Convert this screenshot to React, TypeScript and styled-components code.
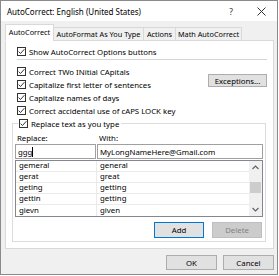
import styled, { createGlobalStyle } from "styled-components";

const GlobalStyle = createGlobalStyle`
  html, body {
    margin: 0;
    padding: 0;
    background: #ffffff;
  }
  * {
    box-sizing: border-box;
  }
`;

const entries = [
  ["gemeral", "general"],
  ["gerat", "great"],
  ["geting", "getting"],
  ["gettin", "getting"],
  ["gievn", "given"],
];

const options = [
  "Correct TWo INitial CApitals",
  "Capitalize first letter of sentences",
  "Capitalize names of days",
  "Correct accidental use of cAPS LOCK key",
];

const tabs = [
  { label: "AutoCorrect", width: 49, active: true },
  { label: "AutoFormat As You Type", width: 91 },
  { label: "Actions", width: 33 },
  { label: "Math AutoCorrect", width: 67 },
];

const Check = () => (
  <CheckBox>
    <svg width="7" height="7" viewBox="0 0 7 7">
      <polyline
        points="0.6,3.6 2.5,5.5 6.4,1.2"
        fill="none"
        stroke="#333"
        strokeWidth="1"
      />
    </svg>
  </CheckBox>
);

export default function App() {
  return (
    <>
      <GlobalStyle />
      <Window>
        <TitleBar>
          <Title>AutoCorrect: English (United States)</Title>
          <TitleButtons>
            <Help>?</Help>
            <svg width="9" height="9" viewBox="0 0 9 9">
              <path d="M0.5 0.5 L8.5 8.5 M8.5 0.5 L0.5 8.5" stroke="#333" strokeWidth="1" />
            </svg>
          </TitleButtons>
        </TitleBar>
        <Body>
          <TabStrip>
            {tabs.map((t) => (
              <Tab key={t.label} $active={t.active} $width={t.width}>
                {t.label}
              </Tab>
            ))}
          </TabStrip>
          <Panel>
            <OptionRow>
              <Check />
              <span>Show AutoCorrect Options buttons</span>
            </OptionRow>
            <Separator />
            <OptionsBlock>
              <OptionsList>
                {options.map((o) => (
                  <OptionRow key={o}>
                    <Check />
                    <span>{o}</span>
                  </OptionRow>
                ))}
              </OptionsList>
              <Button $width={59}>Exceptions...</Button>
            </OptionsBlock>
            <GroupBox>
              <Legend>
                <Check />
                <span>Replace text as you type</span>
              </Legend>
              <FieldGrid>
                <FieldLabel>Replace:</FieldLabel>
                <FieldLabel>With:</FieldLabel>
                <TextInput>
                  ggg<Caret />
                </TextInput>
                <TextInput>MyLongNameHere@Gmail.com</TextInput>
              </FieldGrid>
              <List>
                <Rows>
                  {entries.map(([a, b]) => (
                    <Row key={a}>
                      <Cell $first>{a}</Cell>
                      <Cell>{b}</Cell>
                    </Row>
                  ))}
                </Rows>
                <ScrollBar>
                  <Arrow>
                    <svg width="7" height="5" viewBox="0 0 7 5">
                      <polyline points="0.5,4 3.5,1 6.5,4" fill="none" stroke="#606060" strokeWidth="1.1" />
                    </svg>
                  </Arrow>
                  <Track>
                    <Thumb />
                  </Track>
                  <Arrow>
                    <svg width="7" height="5" viewBox="0 0 7 5">
                      <polyline points="0.5,1 3.5,4 6.5,1" fill="none" stroke="#606060" strokeWidth="1.1" />
                    </svg>
                  </Arrow>
                </ScrollBar>
              </List>
              <GroupButtons>
                <Button $width={50} $height={16} $focused>
                  Add
                </Button>
                <Button $width={50} $height={16} $disabled>
                  Delete
                </Button>
              </GroupButtons>
            </GroupBox>
          </Panel>
          <Footer>
            <Button $width={51} $height={15}>
              OK
            </Button>
            <Button $width={51} $height={15}>
              Cancel
            </Button>
          </Footer>
        </Body>
      </Window>
    </>
  );
}

const Window = styled.div`
  width: 278px;
  height: 275px;
  border: 1px solid #8a8a8a;
  background: #f0f0f0;
  display: flex;
  flex-direction: column;
  font-family: "Noto Sans", "Open Sans", sans-serif;
  font-size: 7.8px;
  color: #000;
  overflow: hidden;
`;

const TitleBar = styled.div`
  height: 20px;
  background: #ffffff;
  display: flex;
  align-items: center;
  justify-content: space-between;
  padding: 0 11px 0 6px;
`;

const Title = styled.div`
  font-size: 8px;
`;

const TitleButtons = styled.div`
  display: flex;
  align-items: center;
  gap: 24px;
`;

const Help = styled.span`
  font-size: 8.5px;
  color: #333;
`;

const Body = styled.div`
  flex: 1;
  display: flex;
  flex-direction: column;
  padding: 3px 3px 0 4px;
`;

const TabStrip = styled.div`
  display: flex;
  align-items: flex-end;
  height: 17px;
  position: relative;
  z-index: 1;
  margin-bottom: -1px;
`;

const Tab = styled.div<{ $active?: boolean; $width: number }>`
  width: ${(p) => p.$width}px;
  height: ${(p) => (p.$active ? 17 : 14)}px;
  border: 1px solid #d9d9d9;
  border-bottom: ${(p) => (p.$active ? "1px solid #ffffff" : "1px solid #d9d9d9")};
  background: ${(p) => (p.$active ? "#ffffff" : "#f0f0f0")};
  display: flex;
  align-items: center;
  justify-content: center;
  white-space: nowrap;
  font-size: 7.3px;
  margin-left: ${(p) => (p.$active ? 0 : -1)}px;
  padding-bottom: ${(p) => (p.$active ? 2 : 0)}px;
`;

const Panel = styled.div`
  height: 209px;
  background: #ffffff;
  border: 1px solid #d9d9d9;
  padding: 4px 6px 0 6px;
  display: flex;
  flex-direction: column;
`;

const OptionRow = styled.div`
  height: 13px;
  display: flex;
  align-items: center;
  gap: 3px;
  padding-left: 5px;
  white-space: nowrap;
`;

const CheckBox = styled.span`
  width: 9px;
  height: 9px;
  border: 1px solid #333;
  background: #fff;
  display: inline-flex;
  align-items: center;
  justify-content: center;
  flex: none;
`;

const Separator = styled.div`
  height: 1px;
  background: #d5d5d5;
  margin: 1px 0 5px 5px;
`;

const OptionsBlock = styled.div`
  display: flex;
  justify-content: space-between;
  align-items: flex-start;
`;

const OptionsList = styled.div`
  display: flex;
  flex-direction: column;
`;

const Button = styled.div<{
  $width: number;
  $height?: number;
  $focused?: boolean;
  $disabled?: boolean;
}>`
  width: ${(p) => p.$width}px;
  height: ${(p) => p.$height ?? 13}px;
  background: ${(p) => (p.$disabled ? "#cccccc" : "#e1e1e1")};
  border: 1px solid ${(p) => (p.$focused ? "#0078d7" : p.$disabled ? "#bfbfbf" : "#adadad")};
  color: ${(p) => (p.$disabled ? "#838383" : "#000")};
  display: flex;
  align-items: center;
  justify-content: center;
  white-space: nowrap;
  margin-top: ${(p) => (p.$height ? 0 : 9)}px;
`;

const GroupBox = styled.fieldset`
  margin: 0 1px 0 0;
  padding: 0 2px 3px 2px;
  border: 1px solid #dcdcdc;
  height: 125px;
  display: flex;
  flex-direction: column;
`;

const Legend = styled.legend`
  padding: 0 2px 0 1px;
  margin-left: 3px;
  height: 13px;
  display: flex;
  align-items: center;
  gap: 3px;
  white-space: nowrap;
`;

const FieldGrid = styled.div`
  display: grid;
  grid-template-columns: 81px 1fr;
  column-gap: 1px;
  margin-top: 2px;
`;

const FieldLabel = styled.div`
  height: 12px;
  display: flex;
  align-items: center;
  padding-left: 2px;
`;

const TextInput = styled.div`
  height: 15px;
  border: 1px solid #a0a0a0;
  background: #fff;
  display: flex;
  align-items: center;
  padding-left: 2px;
  white-space: nowrap;
`;

const Caret = styled.span`
  width: 1px;
  height: 10px;
  background: #000;
`;

const List = styled.div`
  margin-top: 1px;
  height: 57px;
  border: 1px solid #828790;
  display: flex;
  background: #fff;
`;

const Rows = styled.div`
  flex: 1;
  display: flex;
  flex-direction: column;
`;

const Row = styled.div`
  height: 11px;
  display: grid;
  grid-template-columns: 81px 1fr;
  border-bottom: 1px solid #eaeaea;
  &:last-child {
    border-bottom: none;
  }
`;

const Cell = styled.div<{ $first?: boolean }>`
  display: flex;
  align-items: center;
  padding-left: 3px;
  border-right: ${(p) => (p.$first ? "1px solid #eaeaea" : "none")};
  line-height: 1;
`;

const ScrollBar = styled.div`
  width: 13px;
  background: #f0f0f0;
  display: flex;
  flex-direction: column;
`;

const Arrow = styled.div`
  height: 13px;
  display: flex;
  align-items: center;
  justify-content: center;
`;

const Track = styled.div`
  flex: 1;
  padding: 8px 1px 0 1px;
`;

const Thumb = styled.div`
  height: 11px;
  background: #cdcdcd;
`;

const GroupButtons = styled.div`
  display: flex;
  justify-content: flex-end;
  gap: 8px;
  margin-top: 5px;
  padding-right: 1px;
`;

const Footer = styled.div`
  display: flex;
  justify-content: flex-end;
  gap: 6px;
  margin-top: 6px;
`;
